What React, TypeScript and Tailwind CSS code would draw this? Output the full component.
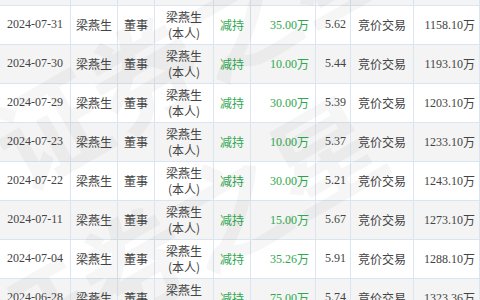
import React from "react";

const rows = [
  { d: "2024-07-31", a: "35.00万", p: "5.62", t: "1158.10万" },
  { d: "2024-07-30", a: "10.00万", p: "5.44", t: "1193.10万" },
  { d: "2024-07-29", a: "30.00万", p: "5.39", t: "1203.10万" },
  { d: "2024-07-23", a: "10.00万", p: "5.37", t: "1233.10万" },
  { d: "2024-07-22", a: "30.00万", p: "5.21", t: "1243.10万" },
  { d: "2024-07-11", a: "15.00万", p: "5.67", t: "1273.10万" },
  { d: "2024-07-04", a: "35.26万", p: "5.91", t: "1288.10万" },
  { d: "2024-06-28", a: "75.00万", p: "5.74", t: "1323.36万" },
];

const serif = "font-['Liberation_Serif','Noto_Sans_CJK_SC',serif]";
const sans = "font-['Noto_Sans_CJK_SC','Noto_Sans',sans-serif]";
const grid = "grid grid-cols-[71px_47px_37px_59px_37px_65px_35px_63px_66px]";
const cell = "border-r border-b border-[#d9e5f0] flex items-center";

export default function App() {
  return (
    <div className="relative w-[480px] h-[300px] overflow-hidden bg-white">
      <div className="flex flex-col">
        <div className={`${grid} h-[6px] bg-[#f4f4f4]`}>
          {Array.from({ length: 9 }).map((_, i) => (
            <div key={i} className={cell} />
          ))}
        </div>
        {rows.map((r, i) => (
          <div
            key={i}
            className={`${grid} h-[39px] ${i % 2 === 1 ? "bg-[#f4f4f4]" : "bg-white"} text-[#444]`}
          >
            <div className={`${cell} justify-center ${serif} text-[12px] pb-[2px]`}>{r.d}</div>
            <div className={`${cell} justify-center ${sans} text-[12px]`}>梁燕生</div>
            <div className={`${cell} justify-center ${sans} text-[12px]`}>董事</div>
            <div className={`${cell} justify-center flex-col ${sans} text-[12px] leading-[16px]`}>
              <span>梁燕生</span>
              <span>(本人)</span>
            </div>
            <div className={`${cell} justify-center ${sans} text-[12px] text-[#2fa84f]`}>减持</div>
            <div className={`${cell} justify-end pr-[6px] ${serif} text-[12px] text-[#2fa84f]`}>
              {r.a.replace("万", "")}
              <span className={sans}>万</span>
            </div>
            <div className={`${cell} justify-end pr-[4px] ${serif} text-[12px] pb-[2px]`}>{r.p}</div>
            <div className={`${cell} justify-center ${sans} text-[12px]`}>竞价交易</div>
            <div className={`${cell} justify-end pr-[4px] ${serif} text-[12px]`}>
              {r.t.replace("万", "")}
              <span className={sans}>万</span>
            </div>
          </div>
        ))}
      </div>
      <div className="pointer-events-none absolute inset-0">
        <div
          className={`absolute left-[-30px] top-[-40px] ${sans} text-[110px] font-bold text-black/[0.035] rotate-[-30deg] whitespace-nowrap`}
        >
          证券之星
        </div>
        <div
          className={`absolute left-[-40px] top-[150px] ${sans} text-[110px] font-bold text-black/[0.035] rotate-[-30deg] whitespace-nowrap`}
        >
          证券之星
        </div>
      </div>
    </div>
  );
}
